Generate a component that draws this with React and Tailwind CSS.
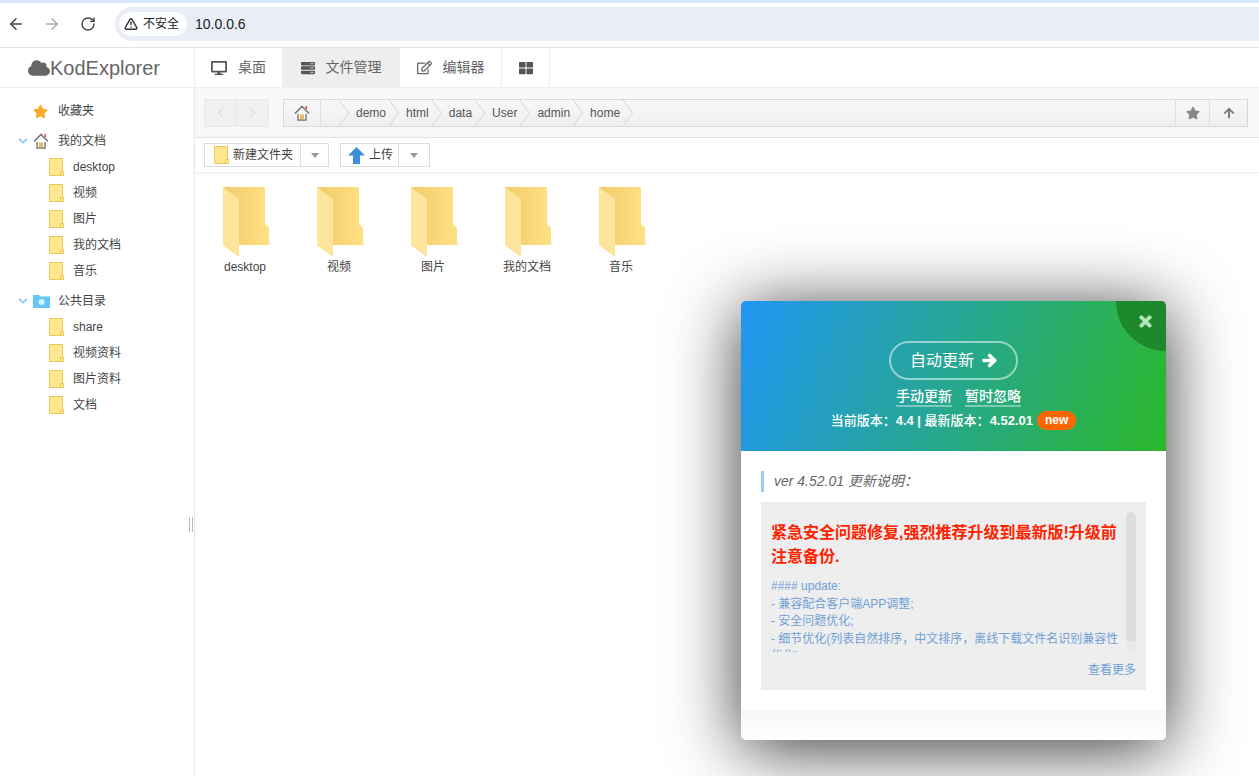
import { ArrowLeft, ArrowRight, RotateCw, TriangleAlert } from "lucide-react";
import {
    FaArrowRight,
    FaArrowUp,
    FaChevronDown,
    FaChevronLeft,
    FaChevronRight,
    FaCloud,
    FaDesktop,
    FaRegEdit,
    FaServer,
    FaStar,
    FaThLarge,
    FaTimes,
} from "react-icons/fa";

const FONT = "font-['Liberation_Sans','Noto_Sans_CJK_SC',sans-serif]";

const SmallFolder = () => (
    <svg width="15" height="18" viewBox="0 0 15 18" className="shrink-0">
        <path d="M0.5 0.5H13.5V17.5H0.5Z" fill="#ffe68f" stroke="#eac95a" />
        <path d="M11.5 17.5V13.5H14.5V17.5Z" fill="#ffe68f" stroke="#eac95a" />
    </svg>
);

const BigFolder = () => (
    <svg width="48" height="70" viewBox="0 0 48 70">
        <defs>
            <linearGradient id="folderBack" x1="0" x2="1" y1="0" y2="0">
                <stop offset="0" stopColor="#f0cb6c" />
                <stop offset="1" stopColor="#ffe184" />
            </linearGradient>
        </defs>
        <path d="M0 0H42V37L46 41V58H15V69L0 58Z" fill="url(#folderBack)" />
        <path d="M0 0L16 12V69L0 58Z" fill="#fde59b" />
        <path d="M46 58H48L46 54Z" fill="#eeeeee" />
    </svg>
);

const HomeIcon = () => (
    <svg width="16" height="16" viewBox="0 0 16 16" className="shrink-0">
        <path d="M4 9V15H12V9" fill="#fff" stroke="#777" strokeWidth="1.4" />
        <path d="M1 8.500L8 1.500L15 8.500" fill="none" stroke="#777" strokeWidth="1.600" />
        <rect x="6" y="9.500" width="4" height="5" fill="#e9b863" />
        <rect x="11.500" y="1" width="1.600" height="3" fill="#c9573c" />
    </svg>
);

const Chevron = () => (
    <svg width="10" height="26" viewBox="0 0 10 26" className="ml-[3px] shrink-0">
        <path d="M0 0L9.500 13L0 26" fill="none" stroke="#d4d4d4" />
    </svg>
);

const Crumb = ({ name }) => (
    <div className="flex items-center pl-[7px]">
        <span>{name}</span>
        <Chevron />
    </div>
);

const Caret = () => <span className="border-x-[4px] border-t-[5px] border-x-transparent border-t-[#999]" />;

const treeItem = "flex items-center h-[26px] pl-[49px] gap-[9px]";
const treeGroup = "flex items-center h-[26px] mt-[4px] pl-[18px]";

const Arrow = () => <FaChevronDown className="text-[10px] text-[#8cc0f5] w-[10px] mr-[5px]" />;

const Tab = ({ icon, label, className }) => (
    <div className={`flex items-center justify-center gap-[11px] border-r border-[#eee] ${className}`}>
        {icon}
        {label && <span>{label}</span>}
    </div>
);

const Sidebar = () => (
    <aside className="w-[195px] shrink-0 border-r border-[#e8e8e8] pt-[10px] text-[12px] text-[#444] relative">
        <div className="flex items-center h-[26px] pl-[33px] gap-[10px]">
            <FaStar className="text-[15px] text-[#fca82b]" />
            <span>收藏夹</span>
        </div>
        <div className={treeGroup}>
            <Arrow />
            <HomeIcon />
            <span className="ml-[9px]">我的文档</span>
        </div>
        {["desktop", "视频", "图片", "我的文档", "音乐"].map((name) => (
            <div key={name} className={treeItem}>
                <SmallFolder />
                <span>{name}</span>
            </div>
        ))}
        <div className={treeGroup}>
            <Arrow />
            <svg width="17" height="14" viewBox="0 0 17 14" className="shrink-0">
                <path d="M0 1H6L7.500 2.500H17V14H0Z" fill="#62c6f6" />
                <circle cx="8.500" cy="8" r="3" fill="#d8f2fd" />
            </svg>
            <span className="ml-[8px]">公共目录</span>
        </div>
        {["share", "视频资料", "图片资料", "文档"].map((name) => (
            <div key={name} className={treeItem}>
                <SmallFolder />
                <span>{name}</span>
            </div>
        ))}
        <div className="absolute left-[189px] top-[429px] w-[4px] h-[15px] border-x border-[#bbb]" />
    </aside>
);

const PathBar = () => (
    <div className="flex items-center h-[50px] pl-[9px] pr-[11px] bg-[#f9f9f9] border-b border-[#e4e4e4]">
        <div className="flex h-[28px] w-[65px] bg-[#f0f0f0] border border-[#eaeaea] text-[#e0e0e0] text-[11px]">
            <div className="flex-1 flex items-center justify-center border-r border-[#e6e6e6]">
                <FaChevronLeft />
            </div>
            <div className="flex-1 flex items-center justify-center">
                <FaChevronRight />
            </div>
        </div>
        <div className="ml-[14px] flex-1 flex h-[28px] border border-[#d8d8d8] bg-gradient-to-b from-[#f8f8f8] to-[#efefef] text-[12px] text-[#555]">
            <div className="flex items-center justify-center w-[37px] border-r border-[#ddd]">
                <HomeIcon />
            </div>
            <div className="w-[15px]" />
            <Chevron />
            <Crumb name="demo" />
            <Crumb name="html" />
            <Crumb name="data" />
            <Crumb name="User" />
            <Crumb name="admin" />
            <Crumb name="home" />
            <div className="ml-auto flex items-center justify-center w-[35px] border-x border-[#ddd]">
                <FaStar className="text-[14px] text-[#888]" />
            </div>
            <div className="flex items-center justify-center w-[37px]">
                <FaArrowUp className="text-[12px] text-[#777]" />
            </div>
        </div>
    </div>
);

const ActionBar = () => (
    <div className="flex items-center h-[35px] pl-[9px] gap-[11px] border-b border-[#eee] shadow-[0_2px_6px_rgba(0,0,0,0.04)] text-[12px] text-[#444]">
        <div className="flex h-[24px] border border-[#ddd]">
            <div className="flex items-center w-[96px] pl-[9px] gap-[4px] border-r border-[#ddd]">
                <SmallFolder />
                <span>新建文件夹</span>
            </div>
            <div className="flex items-center justify-center w-[27px]">
                <Caret />
            </div>
        </div>
        <div className="flex h-[24px] border border-[#ddd]">
            <div className="flex items-center w-[58px] pl-[7px] gap-[4px] border-r border-[#ddd]">
                <svg width="17" height="17" viewBox="0 0 17 17">
                    <path d="M8.500 0L17 8.500H12V17H5V8.500H0Z" fill="#3b8fd8" />
                </svg>
                <span>上传</span>
            </div>
            <div className="flex items-center justify-center w-[30px]">
                <Caret />
            </div>
        </div>
    </div>
);

const FileGrid = () => (
    <div className="flex pl-[3px] pt-[14px] text-[12px] text-[#444]">
        {["desktop", "视频", "图片", "我的文档", "音乐"].map((name) => (
            <div key={name} className="w-[94px] flex flex-col items-center">
                <div className="pl-[4px]">
                    <BigFolder />
                </div>
                <span className="mt-[3px] leading-[14px]">{name}</span>
            </div>
        ))}
    </div>
);

const UpdateDialog = () => (
    <div className="absolute left-[741px] top-[301px] w-[425px] h-[439px] rounded-[5px] bg-white overflow-hidden shadow-[0_8px_70px_rgba(0,0,0,0.8)]">
        <div className="relative h-[150px] bg-[linear-gradient(110deg,#2196f3,#2cb82b)] text-white flex flex-col items-center overflow-hidden">
            <div className="absolute -right-[50px] -top-[50px] w-[100px] h-[100px] rounded-full bg-[#1e882c]" />
            <FaTimes className="absolute right-[12px] top-[12px] text-[17px] text-[#b7e6bd] stroke-[30px]" />
            <div className="mt-[40px] flex items-center justify-center gap-[8px] w-[129px] h-[39px] rounded-full border-2 border-white/50 text-[16px]">
                自动更新
                <FaArrowRight className="text-[15px] stroke-[40px]" />
            </div>
            <div className="mt-[8px] ml-[10px] flex gap-[13px] text-[14px] font-medium leading-[17px]">
                <span className="border-b-2 border-white/40 w-[56px] whitespace-nowrap">手动更新</span>
                <span className="border-b-2 border-white/40 w-[56px] whitespace-nowrap">暂时忽略</span>
            </div>
            <div className="mt-[4px] flex items-center text-[13px] font-medium h-[19px]">
                <span>
                    当前版本：<b>4.4 | </b>最新版本：<b>4.52.01</b>
                </span>
                <span className="ml-[4px] px-[8px] h-[19px] leading-[19px] text-[12px] font-bold rounded-full bg-[#ff6600]">new</span>
            </div>
        </div>
        <div className="px-[20px] pt-[20px] h-[259px] bg-white">
            <div className="h-[21px] leading-[21px] border-l-[3px] border-[#9ccdf8] pl-[10px] text-[14px] italic text-[#666]">
                ver 4.52.01 更新说明：
            </div>
            <div className="relative mt-[10px] h-[188px] bg-[#eeeeee] px-[10px] pt-[10px]">
                <div className="h-[140px] overflow-hidden pr-[16px]">
                    <p className="mt-[9px] text-[16px] leading-[24px] font-bold text-[#ff2200]">
                        紧急安全问题修复,强烈推荐升级到最新版!升级前注意备份.
                    </p>
                    <div className="mt-[9px] text-[12px] leading-[17.500px] text-[#6f9fd6]">
                        <p>#### update:</p>
                        <p>- 兼容配合客户端APP调整;</p>
                        <p>- 安全问题优化;</p>
                        <p>- 细节优化(列表自然排序，中文排序，离线下载文件名识别兼容性优化);</p>
                    </div>
                </div>
                <div className="absolute right-[10px] top-[10px] w-[10px] h-[140px] rounded-[5px] bg-[#e9e9e9]">
                    <div className="h-[130px] rounded-[5px] bg-[#dddddd]" />
                </div>
                <div className="absolute right-[10px] bottom-[11px] text-[12px] leading-[17px] text-[#6f9fd6]">查看更多</div>
            </div>
        </div>
        <div className="h-[30px] bg-gradient-to-b from-[#f7f7f7] to-white" />
    </div>
);

export default function App() {
    return (
        <div className={`relative h-screen overflow-hidden flex flex-col bg-white ${FONT}`}>
            {/* browser chrome */}
            <div className="flex items-center h-[48px] shrink-0 border-t-[3px] border-t-[#d6e6fd] border-b border-b-[#e2e2e2] pb-[2px] pl-[7px] pr-0">
                <ArrowLeft size={18} className="text-[#444]" />
                <ArrowRight size={18} className="ml-[18px] text-[#aaa]" />
                <RotateCw size={16} className="ml-[19px] text-[#444]" />
                <div className="ml-[19px] flex-1 flex items-center h-[34px] rounded-l-full bg-[#e9edf6] pl-[4px]">
                    <div className="flex items-center gap-[5px] h-[24px] w-[68px] pl-[5px] rounded-full bg-white text-[12px] text-[#222]">
                        <TriangleAlert size={14} strokeWidth={2.500} className="text-[#333]" />
                        不安全
                    </div>
                    <span className="ml-[8px] text-[14px] text-[#222]">10.0.0.6</span>
                </div>
            </div>
            {/* app header */}
            <div className="flex h-[40px] shrink-0 border-b border-[#eee] text-[14px] text-[#666]">
                <div className="flex items-center justify-center w-[195px] border-r border-[#eee] pr-[6px] text-[20px] text-[#666]">
                    <FaCloud className="text-[22px] text-[#666]" />
                    KodExplorer
                </div>
                <Tab className="w-[88px]" icon={<FaDesktop className="text-[16px] text-[#555]" />} label="桌面" />
                <Tab className="w-[117px] bg-[#eeeeee]" icon={<FaServer className="text-[14px] text-[#555]" />} label="文件管理" />
                <Tab className="w-[102px]" icon={<FaRegEdit className="text-[15px] text-[#666]" />} label="编辑器" />
                <Tab className="w-[48px]" icon={<FaThLarge className="text-[14px] text-[#555]" />} />
            </div>
            <div className="flex flex-1 min-h-0">
                <Sidebar />
                <main className="flex-1 min-w-0">
                    <PathBar />
                    <ActionBar />
                    <FileGrid />
                </main>
            </div>
            <UpdateDialog />
        </div>
    );
}
